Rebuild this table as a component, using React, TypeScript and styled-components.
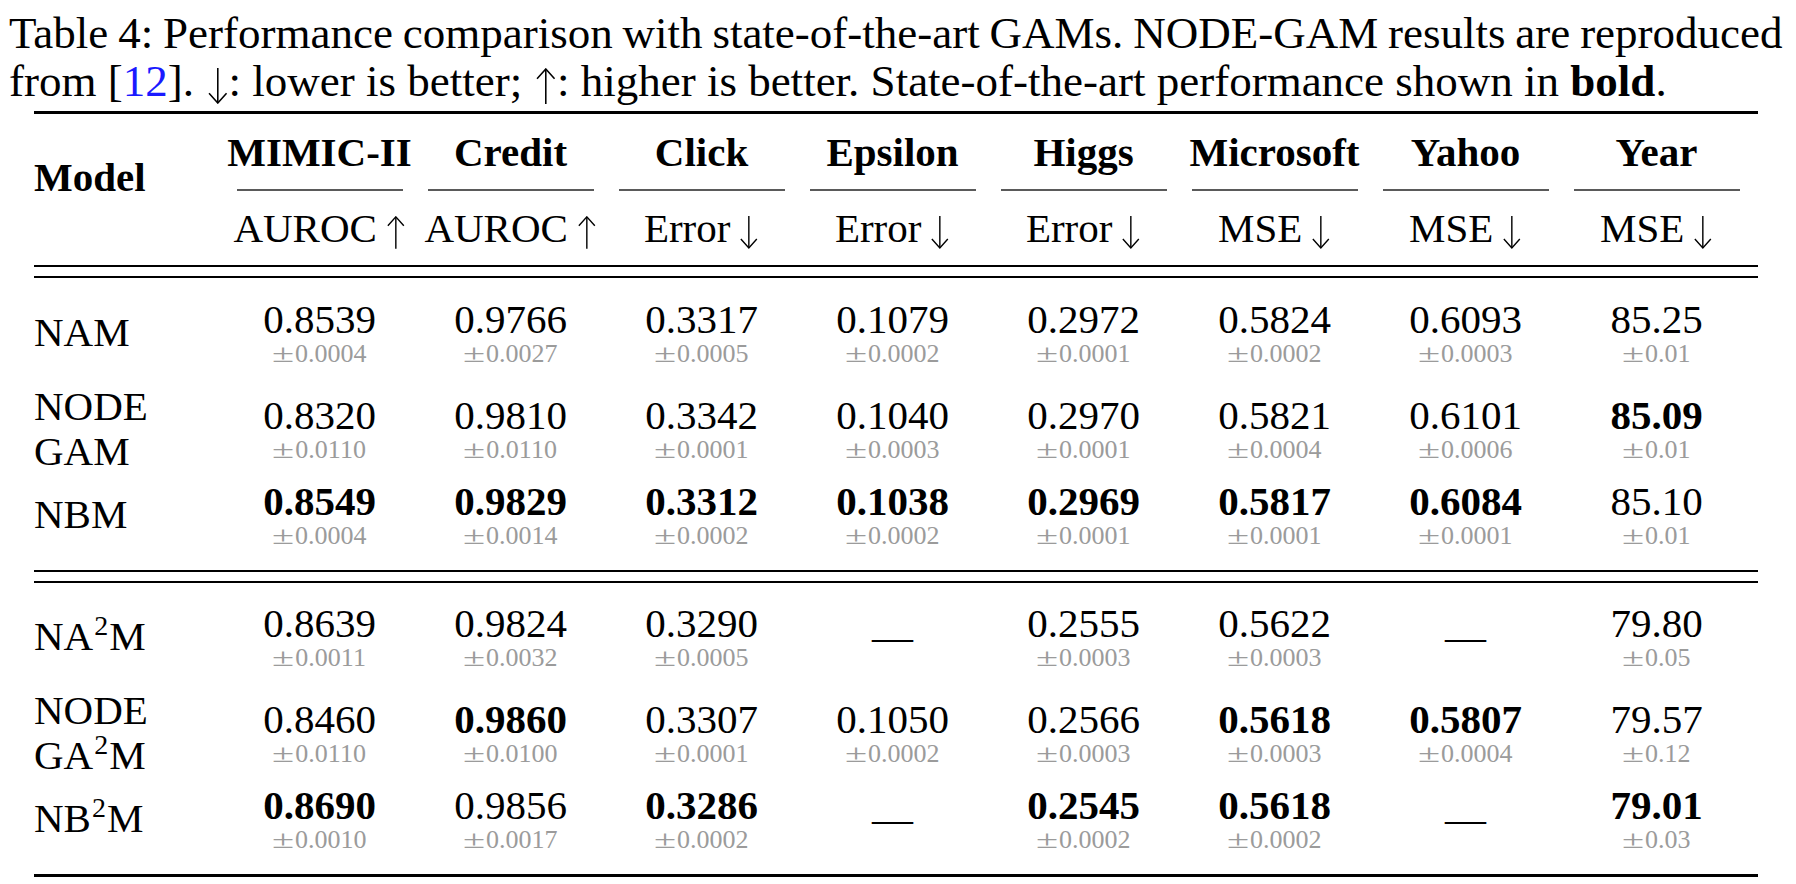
import React from "react";
import styled, { createGlobalStyle } from "styled-components";

const GlobalStyle = createGlobalStyle`
  html, body {
    margin: 0;
    padding: 0;
    background: #fff;
  }
  body {
    font-family: "Liberation Serif", "Times New Roman", serif;
    color: #000;
  }
`;

const Page = styled.div`
  width: 1796px;
  height: 884px;
  overflow: hidden;
`;

const Caption = styled.p`
  margin: 0;
  padding: 9px 0 0 9px;
  font-size: 45px;
  line-height: 48px;
  white-space: nowrap;
`;

// first caption line is justified to the text width in the original, so its spaces are tighter
const TightLine = styled.span`
  word-spacing: -1.4px;
`;

const Ref = styled.span`
  color: #1a1aff;
`;

const Table = styled.div`
  margin: 6px 0 0 34px;
  width: 1724px;
  display: flex;
  flex-direction: column;
`;

const Rule = styled.div<{ $weight: number }>`
  height: ${(p) => p.$weight}px;
  background: #000;
`;

const DoubleRule = styled.div`
  display: flex;
  flex-direction: column;
  gap: 9px;
`;

const Grid = styled.div`
  display: grid;
  grid-template-columns: 190px repeat(8, 191px);
`;

const HeaderGrid = styled(Grid)`
  padding-bottom: 14px;
`;

const ModelHead = styled.div`
  padding-top: 41px;
  font-size: 41px;
  line-height: 45px;
  font-weight: bold;
`;

const HeadCell = styled.div`
  display: flex;
  flex-direction: column;
  align-items: center;
`;

const DatasetName = styled.div`
  padding-top: 16px;
  font-size: 41px;
  line-height: 45px;
  font-weight: bold;
  white-space: nowrap;
`;

const CMidRule = styled.div`
  margin-top: 14px;
  width: 166px;
  height: 2px;
  background: #5a5a5a;
`;

const Metric = styled.div`
  margin-top: 15px;
  font-size: 41px;
  line-height: 45px;
  white-space: nowrap;
`;

const Block = styled.div<{ $top: number }>`
  padding-top: ${(p) => p.$top}px;
  padding-bottom: 4px;
`;

const Row = styled(Grid)`
  height: 91px;
  align-items: center;
`;

const Label = styled.div`
  font-size: 41px;
  line-height: 45px;
  margin-bottom: 12px;
  white-space: nowrap;
`;

const Cell = styled.div`
  display: flex;
  flex-direction: column;
  align-items: center;
`;

const Value = styled.span<{ $bold?: boolean }>`
  font-size: 41px;
  line-height: 30px;
  font-weight: ${(p) => (p.$bold ? "bold" : "normal")};
`;

const Spread = styled.span`
  font-size: 26px;
  line-height: 40px;
  color: #9b9b9b;
`;

const Pm = styled.span`
  display: inline-block;
  transform: scaleX(1.55);
  margin: 0 5px 0 3px;
`;

const Dash = styled.div`
  font-size: 41px;
  line-height: 45px;
  margin-bottom: 12px;
`;

const Sup = styled.sup`
  display: inline-block;
  margin: 0 1px;
  font-size: 28px;
  line-height: 0;
  vertical-align: 15px;
`;

const ArrowSvg = styled.svg<{ $drop: number; $gap: number }>`
  width: 0.48em;
  height: 0.8em;
  vertical-align: ${(p) => p.$drop}em;
  margin-left: ${(p) => p.$gap}em;
`;

const Arrow = ({ down, drop = -0.17, gap = 0.04 }: { down?: boolean; drop?: number; gap?: number }) => (
  <ArrowSvg $drop={drop} $gap={gap} viewBox="0 0 22 37" fill="none" stroke="#000" strokeWidth={1.6}>
    {down ? (
      <>
        <line x1="11" y1="0" x2="11" y2="36" />
        <polyline points="2,26 11,36 20,26" />
      </>
    ) : (
      <>
        <line x1="11" y1="1" x2="11" y2="37" />
        <polyline points="2,11 11,1 20,11" />
      </>
    )}
  </ArrowSvg>
);

type Entry = [string, string, boolean?] | null;

interface Line {
  label: React.ReactNode;
  cells: Entry[];
}

const datasets: [string, string, boolean][] = [
  ["MIMIC-II", "AUROC", false],
  ["Credit", "AUROC", false],
  ["Click", "Error", true],
  ["Epsilon", "Error", true],
  ["Higgs", "Error", true],
  ["Microsoft", "MSE", true],
  ["Yahoo", "MSE", true],
  ["Year", "MSE", true],
];

const gams: Line[] = [
  {
    label: "NAM",
    cells: [
      ["0.8539", "0.0004"], ["0.9766", "0.0027"], ["0.3317", "0.0005"], ["0.1079", "0.0002"],
      ["0.2972", "0.0001"], ["0.5824", "0.0002"], ["0.6093", "0.0003"], ["85.25", "0.01"],
    ],
  },
  {
    label: (<>NODE<br />GAM</>),
    cells: [
      ["0.8320", "0.0110"], ["0.9810", "0.0110"], ["0.3342", "0.0001"], ["0.1040", "0.0003"],
      ["0.2970", "0.0001"], ["0.5821", "0.0004"], ["0.6101", "0.0006"], ["85.09", "0.01", true],
    ],
  },
  {
    label: "NBM",
    cells: [
      ["0.8549", "0.0004", true], ["0.9829", "0.0014", true], ["0.3312", "0.0002", true], ["0.1038", "0.0002", true],
      ["0.2969", "0.0001", true], ["0.5817", "0.0001", true], ["0.6084", "0.0001", true], ["85.10", "0.01"],
    ],
  },
];

const ga2ms: Line[] = [
  {
    label: (<>NA<Sup>2</Sup>M</>),
    cells: [
      ["0.8639", "0.0011"], ["0.9824", "0.0032"], ["0.3290", "0.0005"], null,
      ["0.2555", "0.0003"], ["0.5622", "0.0003"], null, ["79.80", "0.05"],
    ],
  },
  {
    label: (<>NODE<br />GA<Sup>2</Sup>M</>),
    cells: [
      ["0.8460", "0.0110"], ["0.9860", "0.0100", true], ["0.3307", "0.0001"], ["0.1050", "0.0002"],
      ["0.2566", "0.0003"], ["0.5618", "0.0003", true], ["0.5807", "0.0004", true], ["79.57", "0.12"],
    ],
  },
  {
    label: (<>NB<Sup>2</Sup>M</>),
    cells: [
      ["0.8690", "0.0010", true], ["0.9856", "0.0017"], ["0.3286", "0.0002", true], null,
      ["0.2545", "0.0002", true], ["0.5618", "0.0002", true], null, ["79.01", "0.03", true],
    ],
  },
];

const Rows = ({ lines }: { lines: Line[] }) => (
  <>
    {lines.map((line, i) => (
      <Row key={i}>
        <Label>{line.label}</Label>
        {line.cells.map((c, j) =>
          c ? (
            <Cell key={j}>
              <Value $bold={c[2]}>{c[0]}</Value>
              <Spread>
                <Pm>±</Pm>
                {c[1]}
              </Spread>
            </Cell>
          ) : (
            <Cell key={j}>
              <Dash>—</Dash>
            </Cell>
          )
        )}
      </Row>
    ))}
  </>
);

export default function App() {
  return (
    <Page>
      <GlobalStyle />
      <Caption>
        <TightLine>
          Table 4: Performance comparison with state-of-the-art GAMs. NODE-GAM results are reproduced
        </TightLine>
        <br />
        from [<Ref>12</Ref>]. <Arrow down />: lower is better; <Arrow />: higher is better. State-of-the-art
        performance shown in <b>bold</b>.
      </Caption>
      <Table>
        <Rule $weight={3} />
        <HeaderGrid>
          <ModelHead>Model</ModelHead>
          {datasets.map(([name, metric, down]) => (
            <HeadCell key={name}>
              <DatasetName>{name}</DatasetName>
              <CMidRule />
              <Metric>
                {metric} <Arrow down={down} drop={-0.16} gap={-0.03} />
              </Metric>
            </HeadCell>
          ))}
        </HeaderGrid>
        <DoubleRule>
          <Rule $weight={2} />
          <Rule $weight={2} />
        </DoubleRule>
        <Block $top={15}>
          <Rows lines={gams} />
        </Block>
        <DoubleRule>
          <Rule $weight={2} />
          <Rule $weight={2} />
        </DoubleRule>
        <Block $top={14}>
          <Rows lines={ga2ms} />
        </Block>
        <Rule $weight={3} />
      </Table>
    </Page>
  );
}
